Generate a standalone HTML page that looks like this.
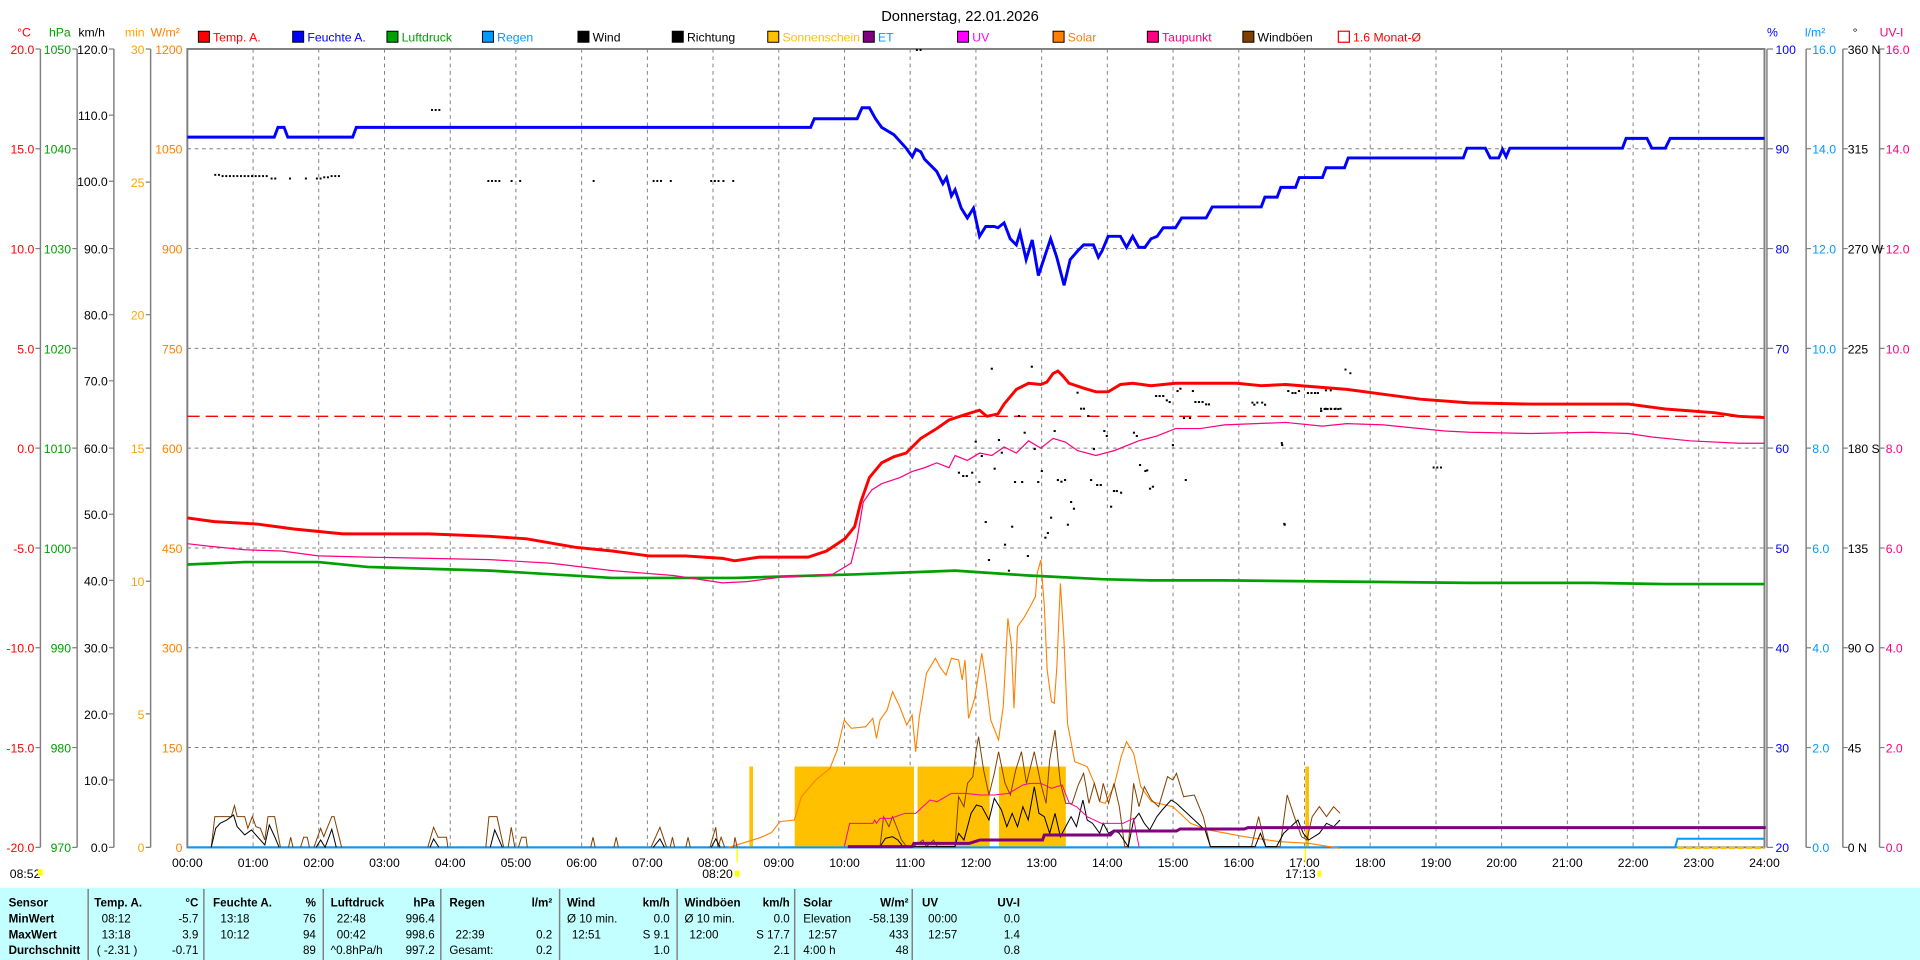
<!DOCTYPE html>
<html><head><meta charset="utf-8"><style>
html,body{margin:0;padding:0;background:#fff;}
svg{display:block;}
text{font-family:"Liberation Sans",sans-serif;}
</style></head><body>
<svg width="1920" height="960" viewBox="0 0 1568 784" preserveAspectRatio="none" xmlns="http://www.w3.org/2000/svg">
<rect width="1568" height="784" fill="#fff"/>
<text x="784" y="17" font-size="12" text-anchor="middle">Donnerstag, 22.01.2026</text>

<!-- legend -->
<g font-size="10">
<rect x="162" y="25.5" width="9" height="9" fill="#ff0000" stroke="#000" stroke-width="0.8"/><text x="174" y="34" fill="#ff0000">Temp. A.</text>
<rect x="239" y="25.5" width="9" height="9" fill="#0000ff" stroke="#000" stroke-width="0.8"/><text x="251" y="34" fill="#0000ff">Feuchte A.</text>
<rect x="316" y="25.5" width="9" height="9" fill="#00a000" stroke="#000" stroke-width="0.8"/><text x="328" y="34" fill="#00a000">Luftdruck</text>
<rect x="394" y="25.5" width="9" height="9" fill="#0099ff" stroke="#000" stroke-width="0.8"/><text x="406" y="34" fill="#0099ff">Regen</text>
<rect x="472" y="25.5" width="9" height="9" fill="#000" stroke="#000" stroke-width="0.8"/><text x="484" y="34" fill="#000">Wind</text>
<rect x="549" y="25.5" width="9" height="9" fill="#000" stroke="#000" stroke-width="0.8"/><text x="561" y="34" fill="#000">Richtung</text>
<rect x="627" y="25.5" width="9" height="9" fill="#ffc000" stroke="#000" stroke-width="0.8"/><text x="639" y="34" fill="#ffc000">Sonnenschein</text>
<rect x="705" y="25.5" width="9" height="9" fill="#800080" stroke="#000" stroke-width="0.8"/><text x="717" y="34" fill="#0099ff">ET</text>
<rect x="782" y="25.5" width="9" height="9" fill="#ff00ff" stroke="#000" stroke-width="0.8"/><text x="794" y="34" fill="#ff00ff">UV</text>
<rect x="860" y="25.5" width="9" height="9" fill="#ff8000" stroke="#000" stroke-width="0.8"/><text x="872" y="34" fill="#ff8000">Solar</text>
<rect x="937" y="25.5" width="9" height="9" fill="#ff0080" stroke="#000" stroke-width="0.8"/><text x="949" y="34" fill="#ff0080">Taupunkt</text>
<rect x="1015" y="25.5" width="9" height="9" fill="#804000" stroke="#000" stroke-width="0.8"/><text x="1027" y="34" fill="#000">Windböen</text>
<rect x="1093" y="25.5" width="9" height="9" fill="#fff" stroke="#ff0000" stroke-width="1"/><text x="1105" y="34" fill="#ff0000">1.6 Monat-Ø</text>
</g>

<!-- axis headers -->
<g font-size="10">
<text x="14" y="30" fill="#ff0000">°C</text>
<text x="40" y="30" fill="#00a000">hPa</text>
<text x="64" y="30" fill="#000">km/h</text>
<text x="102" y="30" fill="#ffa500">min</text>
<text x="123" y="30" fill="#ff8000">W/m²</text>
<text x="1443" y="30" fill="#0000ff">%</text>
<text x="1474" y="30" fill="#0099ff">l/m²</text>
<text x="1513" y="30" fill="#000">°</text>
<text x="1535" y="30" fill="#ff0080">UV-I</text>
</g>

<!-- grid -->
<g stroke="#808080" stroke-width="0.8" stroke-dasharray="3,3">
<line x1="153" y1="121.5" x2="1441" y2="121.5"/><line x1="153" y1="203" x2="1441" y2="203"/><line x1="153" y1="284.5" x2="1441" y2="284.5"/><line x1="153" y1="366" x2="1441" y2="366"/><line x1="153" y1="447.5" x2="1441" y2="447.5"/><line x1="153" y1="529" x2="1441" y2="529"/><line x1="153" y1="610.5" x2="1441" y2="610.5"/>
<line x1="206.7" y1="40" x2="206.7" y2="692"/><line x1="260.3" y1="40" x2="260.3" y2="692"/><line x1="314" y1="40" x2="314" y2="692"/><line x1="367.7" y1="40" x2="367.7" y2="692"/><line x1="421.3" y1="40" x2="421.3" y2="692"/><line x1="475" y1="40" x2="475" y2="692"/><line x1="528.7" y1="40" x2="528.7" y2="692"/><line x1="582.3" y1="40" x2="582.3" y2="692"/><line x1="636" y1="40" x2="636" y2="692"/><line x1="689.7" y1="40" x2="689.7" y2="692"/><line x1="743.3" y1="40" x2="743.3" y2="692"/><line x1="797" y1="40" x2="797" y2="692"/><line x1="850.7" y1="40" x2="850.7" y2="692"/><line x1="904.3" y1="40" x2="904.3" y2="692"/><line x1="958" y1="40" x2="958" y2="692"/><line x1="1011.7" y1="40" x2="1011.7" y2="692"/><line x1="1065.3" y1="40" x2="1065.3" y2="692"/><line x1="1119" y1="40" x2="1119" y2="692"/><line x1="1172.7" y1="40" x2="1172.7" y2="692"/><line x1="1226.3" y1="40" x2="1226.3" y2="692"/><line x1="1280" y1="40" x2="1280" y2="692"/><line x1="1333.7" y1="40" x2="1333.7" y2="692"/><line x1="1387.3" y1="40" x2="1387.3" y2="692"/>
</g>

<!-- axes lines -->
<g stroke="#808080" stroke-width="1.2" fill="none">
<line x1="33" y1="40" x2="33" y2="692"/><line x1="63" y1="40" x2="63" y2="692"/><line x1="93" y1="40" x2="93" y2="692"/><line x1="123" y1="40" x2="123" y2="692"/>
<line x1="1475" y1="40" x2="1475" y2="692"/><line x1="1505" y1="40" x2="1505" y2="692"/><line x1="1535" y1="40" x2="1535" y2="692"/>
</g>
<rect x="153" y="40" width="1288" height="652" fill="none" stroke="#808080" stroke-width="1.6"/>
<line x1="1443" y1="40" x2="1443" y2="692" stroke="#808080" stroke-width="1.2"/>
<!-- ticks -->
<g stroke="#808080" stroke-width="1">
<path d="M29 40H33M29 121.5H33M29 203H33M29 284.5H33M29 366H33M29 447.5H33M29 529H33M29 610.5H33M29 692H33"/>
<path d="M59 40H63M59 121.5H63M59 203H63M59 284.5H63M59 366H63M59 447.5H63M59 529H63M59 610.5H63M59 692H63"/>
<path d="M89 40H93M89 94H93M89 148H93M89 203H93M89 257H93M89 311H93M89 366H93M89 420H93M89 474H93M89 529H93M89 583H93M89 637H93M89 692H93"/>
<path d="M119 40H123M119 148.7H123M119 257H123M119 366H123M119 474.7H123M119 583H123M119 692H123"/>
<path d="M1443 40H1448M1443 121.5H1448M1443 203H1448M1443 284.5H1448M1443 366H1448M1443 447.5H1448M1443 529H1448M1443 610.5H1448M1443 692H1448"/>
<path d="M1475 40H1479M1475 121.5H1479M1475 203H1479M1475 284.5H1479M1475 366H1479M1475 447.5H1479M1475 529H1479M1475 610.5H1479M1475 692H1479"/>
<path d="M1505 40H1509M1505 121.5H1509M1505 203H1509M1505 284.5H1509M1505 366H1509M1505 447.5H1509M1505 529H1509M1505 610.5H1509M1505 692H1509"/>
<path d="M1535 40H1539M1535 121.5H1539M1535 203H1539M1535 284.5H1539M1535 366H1539M1535 447.5H1539M1535 529H1539M1535 610.5H1539M1535 692H1539"/>
</g>

<!-- left labels -->
<g font-size="10" text-anchor="end">
<g fill="#ff0000"><text x="28" y="44">20.0</text><text x="28" y="125.5">15.0</text><text x="28" y="207">10.0</text><text x="28" y="288.5">5.0</text><text x="28" y="370">0.0</text><text x="28" y="451.5">-5.0</text><text x="28" y="533">-10.0</text><text x="28" y="614.5">-15.0</text><text x="28" y="696">-20.0</text></g>
<g fill="#00a000"><text x="58" y="44">1050</text><text x="58" y="125.5">1040</text><text x="58" y="207">1030</text><text x="58" y="288.5">1020</text><text x="58" y="370">1010</text><text x="58" y="451.5">1000</text><text x="58" y="533">990</text><text x="58" y="614.5">980</text><text x="58" y="696">970</text></g>
<g fill="#000"><text x="88" y="44">120.0</text><text x="88" y="98">110.0</text><text x="88" y="152">100.0</text><text x="88" y="207">90.0</text><text x="88" y="261">80.0</text><text x="88" y="315">70.0</text><text x="88" y="370">60.0</text><text x="88" y="424">50.0</text><text x="88" y="478">40.0</text><text x="88" y="533">30.0</text><text x="88" y="587">20.0</text><text x="88" y="641">10.0</text><text x="88" y="696">0.0</text></g>
<g fill="#ffa500"><text x="118" y="44">30</text><text x="118" y="152.7">25</text><text x="118" y="261">20</text><text x="118" y="370">15</text><text x="118" y="478.7">10</text><text x="118" y="587">5</text><text x="118" y="696">0</text></g>
<g fill="#ff8000"><text x="149" y="44">1200</text><text x="149" y="125.5">1050</text><text x="149" y="207">900</text><text x="149" y="288.5">750</text><text x="149" y="370">600</text><text x="149" y="451.5">450</text><text x="149" y="533">300</text><text x="149" y="614.5">150</text><text x="149" y="696">0</text></g>
</g>
<!-- right labels -->
<g font-size="10">
<g fill="#0000ff"><text x="1450" y="44">100</text><text x="1450" y="125.5">90</text><text x="1450" y="207">80</text><text x="1450" y="288.5">70</text><text x="1450" y="370">60</text><text x="1450" y="451.5">50</text><text x="1450" y="533">40</text><text x="1450" y="614.5">30</text><text x="1450" y="696">20</text></g>
<g fill="#0099ff"><text x="1480" y="44">16.0</text><text x="1480" y="125.5">14.0</text><text x="1480" y="207">12.0</text><text x="1480" y="288.5">10.0</text><text x="1480" y="370">8.0</text><text x="1480" y="451.5">6.0</text><text x="1480" y="533">4.0</text><text x="1480" y="614.5">2.0</text><text x="1480" y="696">0.0</text></g>
<g fill="#000"><text x="1509" y="44">360 N</text><text x="1509" y="125.5">315</text><text x="1509" y="207">270 W</text><text x="1509" y="288.5">225</text><text x="1509" y="370">180 S</text><text x="1509" y="451.5">135</text><text x="1509" y="533">90  O</text><text x="1509" y="614.5">45</text><text x="1509" y="696">0   N</text></g>
<g fill="#ff0080"><text x="1540" y="44">16.0</text><text x="1540" y="125.5">14.0</text><text x="1540" y="207">12.0</text><text x="1540" y="288.5">10.0</text><text x="1540" y="370">8.0</text><text x="1540" y="451.5">6.0</text><text x="1540" y="533">4.0</text><text x="1540" y="614.5">2.0</text><text x="1540" y="696">0.0</text></g>
</g>

<!-- hour labels -->
<g font-size="10" text-anchor="middle">
<text x="153" y="708">00:00</text><text x="206.7" y="708">01:00</text><text x="260.3" y="708">02:00</text><text x="314" y="708">03:00</text><text x="367.7" y="708">04:00</text><text x="421.3" y="708">05:00</text><text x="475" y="708">06:00</text><text x="528.7" y="708">07:00</text><text x="582.3" y="708">08:00</text><text x="636" y="708">09:00</text><text x="689.7" y="708">10:00</text><text x="743.3" y="708">11:00</text><text x="797" y="708">12:00</text><text x="850.7" y="708">13:00</text><text x="904.3" y="708">14:00</text><text x="958" y="708">15:00</text><text x="1011.7" y="708">16:00</text><text x="1065.3" y="708">17:00</text><text x="1119" y="708">18:00</text><text x="1172.7" y="708">19:00</text><text x="1226.3" y="708">20:00</text><text x="1280" y="708">21:00</text><text x="1333.7" y="708">22:00</text><text x="1387.3" y="708">23:00</text><text x="1441" y="708">24:00</text>
<text x="586" y="717">08:20</text><text x="1062" y="717">17:13</text>
</g>
<text x="8" y="717" font-size="10">08:52</text>
<rect x="31" y="710" width="4" height="5" fill="#ffff00"/>
<rect x="600" y="711" width="4" height="5" fill="#ffff00"/>
<rect x="1076" y="711" width="3" height="5" fill="#ffff00"/>
<line x1="602" y1="692" x2="602" y2="704" stroke="#ffff00" stroke-width="1.2"/>
<line x1="1066" y1="692" x2="1066" y2="704" stroke="#ffff00" stroke-width="1.2"/>

<!-- sunshine bars -->
<g fill="#ffc000">
<rect x="612" y="626" width="3" height="66"/>
<rect x="649" y="626" width="97.4" height="66"/>
<rect x="749.3" y="626" width="58.9" height="66"/>
<rect x="815.8" y="626" width="54.6" height="66"/>
<rect x="1066" y="626" width="3" height="66"/>
</g>
<line x1="1370" y1="692.5" x2="1441" y2="692.5" stroke="#ffc000" stroke-width="2" stroke-dasharray="5,2"/>

<!-- dashed monthly avg -->
<line x1="153" y1="340" x2="1441" y2="340" stroke="#ff0000" stroke-width="1.2" stroke-dasharray="10,5"/>

<!-- rain line -->
<polyline fill="none" stroke="#0099ff" stroke-width="1.6" points="153,692 1368,692 1370,685 1441,685"/>

<!-- solar orange -->
<polyline fill="none" stroke="#ff8000" stroke-width="0.9" points="595,692 605,689 621,684 630,680 637,671 648.7,669.7 654.5,650.6 666.2,637 677.8,627.5 683.7,612.5 689.5,588 695.3,594.8 707,593.5 712.8,586.7 715.8,603 718.7,588 724.5,579.8 728.9,564.9 734.7,577.1 740.5,592.1 744.9,583.9 747.8,613.9 750.8,585.3 756.6,549.9 763.9,537.6 768.3,545.8 772.6,551.3 777,537.6 782.9,539 785.8,555.3 788.1,539 791,586.7 796,570.3 801.8,533.6 804.7,552.6 809.1,588 815.5,604.3 819.3,577.1 823.1,505 826,526.8 828.1,578.5 831,511.8 836.8,503.6 841.2,495.5 845.6,487.3 847,468.2 850,457.4 852.9,495.5 855.2,547.2 858.7,573 861,574.4 863.1,544.5 866,476.4 868.9,522.7 871.8,590.7 877.7,622 887.9,626.1 893.7,639.7 898.1,654.7 902.5,656.1 909.7,642.4 915.6,618 920,605.7 925.8,615.2 931.6,642.4 940.4,654.7 957.9,658.8 972.4,672.4 987,677.8 1016.2,683.3 1045.4,687.4 1068.7,688.7 1094.4,692.8"/>

<!-- early wind / gust (zoom8 coords) -->
<g transform="translate(147,604.3) scale(0.3646,0.2722)" fill="none">
<g stroke="#804000" stroke-width="1" vector-effect="non-scaling-stroke">
<polyline vector-effect="non-scaling-stroke" points="70,322 78,230 115,230 122,197 128,230 145,230 152,265 162,230 170,260 180,265 190,300 197,230 212,230 225,322"/>
<polyline vector-effect="non-scaling-stroke" points="243,322 248,292 253,322"/>
<polyline vector-effect="non-scaling-stroke" points="270,322 277,292 285,292 290,322"/>
<polyline vector-effect="non-scaling-stroke" points="300,322 315,265 322,290 340,230 345,230 362,322"/>
<polyline vector-effect="non-scaling-stroke" points="555,322 568,262 578,292 597,292 600,322"/>
<polyline vector-effect="non-scaling-stroke" points="685,322 692,230 710,230 725,322"/>
<polyline vector-effect="non-scaling-stroke" points="735,322 742,262 750,322"/>
<polyline vector-effect="non-scaling-stroke" points="758,322 765,292 775,292 778,322"/>
<polyline vector-effect="non-scaling-stroke" points="920,322 925,292 930,322"/>
<polyline vector-effect="non-scaling-stroke" points="972,322 977,292 982,322"/>
<polyline vector-effect="non-scaling-stroke" points="1055,322 1075,262 1090,322"/>
<polyline vector-effect="non-scaling-stroke" points="1098,322 1103,292 1108,322"/>
<polyline vector-effect="non-scaling-stroke" points="1133,322 1138,292 1143,322"/>
<polyline vector-effect="non-scaling-stroke" points="1187,322 1200,262 1205,322 1212,292 1220,322"/>
<polyline vector-effect="non-scaling-stroke" points="1240,322 1243,292 1248,322"/>
</g>
<g stroke="#000">
<polyline vector-effect="non-scaling-stroke" points="70,322 80,265 90,250 105,240 120,225 128,260 145,285 160,270 180,300 190,315 200,255 212,290 222,322"/>
<polyline vector-effect="non-scaling-stroke" points="305,322 315,300 325,322 340,268 350,322"/>
<polyline vector-effect="non-scaling-stroke" points="560,322 568,297 580,322"/>
<polyline vector-effect="non-scaling-stroke" points="695,322 705,270 722,322"/>
<polyline vector-effect="non-scaling-stroke" points="1060,322 1075,297 1085,322"/>
<polyline vector-effect="non-scaling-stroke" points="1190,322 1200,297 1210,322"/>
</g>
</g>

<!-- midday series (zoom5 coords) -->
<g transform="translate(637,277.7) scale(0.2917,0.2722)" fill="none">
<polyline stroke="#804000" vector-effect="non-scaling-stroke" points="280,1520 290,1430 305,1460 315,1430 330,1470 340,1500 355,1520 375,1520 400,1500 410,1520 430,1500 440,1520 490,1520 500,1370 515,1400 525,1330 540,1310 548,1240 556,1190 570,1290 585,1365 600,1300 612,1235 630,1330 645,1365 660,1290 676,1235 690,1330 712,1235 730,1330 745,1390 755,1260 770,1170 785,1330 800,1390 818,1390 835,1335 850,1300 865,1390 880,1330 895,1385 905,1330 920,1390 935,1330 950,1400 965,1520 975,1520 990,1330 1005,1400 1020,1340 1040,1380 1060,1400 1085,1310 1100,1320 1110,1300 1130,1370 1160,1365 1185,1430 1205,1520 1320,1520 1340,1430 1360,1520 1400,1520 1420,1365 1440,1430 1460,1490 1475,1500 1490,1430 1510,1400 1530,1430 1550,1400 1568,1420"/>
<polyline stroke="#000" vector-effect="non-scaling-stroke" points="280,1520 295,1495 315,1490 330,1500 345,1520 490,1520 500,1480 515,1500 535,1420 550,1395 565,1400 585,1440 600,1375 620,1410 635,1460 650,1420 665,1460 680,1400 695,1440 712,1340 725,1420 740,1430 755,1480 770,1420 785,1490 800,1460 815,1430 830,1460 848,1380 860,1440 875,1450 895,1480 905,1450 920,1480 935,1470 950,1480 975,1520 990,1440 1005,1420 1020,1450 1035,1470 1055,1430 1070,1410 1095,1380 1110,1390 1140,1420 1170,1450 1190,1470 1205,1520 1330,1520 1345,1480 1360,1520 1390,1520 1410,1480 1450,1440 1465,1480 1480,1500 1495,1490 1510,1480 1530,1450 1550,1460 1568,1440"/>
<polyline stroke="#ff00a0" vector-effect="non-scaling-stroke" points="180,1520 195,1450 260,1450 265,1440 270,1450 280,1435 310,1435 350,1420 380,1420 400,1400 420,1380 440,1385 480,1360 520,1360 560,1365 600,1365 640,1360 680,1335 700,1330 730,1330 760,1345 790,1335 810,1390 830,1400 860,1430 900,1450 960,1450 990,1435 1005,1520"/>
<polyline stroke="#800080" stroke-width="3" vector-effect="non-scaling-stroke" points="190,1520 370,1520 375,1510 530,1510 560,1500 735,1500 740,1485 925,1485 935,1473 1110,1473 1120,1467 1300,1467 1310,1463 1568,1463 2760,1463"/>
<g fill="#000" stroke="none">
<rect x="590" y="83" width="6" height="6"/><rect x="702" y="77" width="6" height="6"/><rect x="830" y="155" width="6" height="6"/><rect x="840" y="203" width="6" height="6"/><rect x="848" y="203" width="6" height="6"/><rect x="860" y="225" width="6" height="6"/><rect x="666" y="225" width="6" height="6"/><rect x="682" y="275" width="6" height="6"/><rect x="766" y="270" width="6" height="6"/><rect x="905" y="270" width="6" height="6"/><rect x="912" y="285" width="6" height="6"/><rect x="988" y="275" width="6" height="6"/><rect x="996" y="285" width="6" height="6"/><rect x="545" y="302" width="6" height="6"/><rect x="610" y="297" width="6" height="6"/><rect x="710" y="324" width="6" height="6"/><rect x="876" y="324" width="6" height="6"/><rect x="1097" y="312" width="6" height="6"/><rect x="1403" y="312" width="6" height="6"/><rect x="562" y="345" width="6" height="6"/><rect x="618" y="335" width="6" height="6"/><rect x="598" y="383" width="6" height="6"/><rect x="498" y="395" width="6" height="6"/><rect x="510" y="405" width="6" height="6"/><rect x="520" y="405" width="6" height="6"/><rect x="535" y="395" width="6" height="6"/><rect x="730" y="390" width="6" height="6"/><rect x="1005" y="372" width="6" height="6"/><rect x="1020" y="390" width="6" height="6"/><rect x="1025" y="388" width="6" height="6"/><rect x="555" y="423" width="6" height="6"/><rect x="655" y="423" width="6" height="6"/><rect x="675" y="423" width="6" height="6"/><rect x="720" y="423" width="6" height="6"/><rect x="775" y="417" width="6" height="6"/><rect x="785" y="422" width="6" height="6"/><rect x="795" y="417" width="6" height="6"/><rect x="868" y="417" width="6" height="6"/><rect x="885" y="432" width="6" height="6"/><rect x="895" y="432" width="6" height="6"/><rect x="1133" y="417" width="6" height="6"/><rect x="1033" y="443" width="6" height="6"/><rect x="1041" y="437" width="6" height="6"/><rect x="932" y="450" width="6" height="6"/><rect x="940" y="450" width="6" height="6"/><rect x="952" y="455" width="6" height="6"/><rect x="812" y="483" width="6" height="6"/><rect x="820" y="503" width="6" height="6"/><rect x="924" y="497" width="6" height="6"/><rect x="756" y="530" width="6" height="6"/><rect x="573" y="543" width="6" height="6"/><rect x="647" y="557" width="6" height="6"/><rect x="803" y="551" width="6" height="6"/><rect x="1410" y="551" width="6" height="6"/><rect x="747" y="576" width="6" height="6"/><rect x="740" y="590" width="6" height="6"/><rect x="627" y="611" width="6" height="6"/><rect x="582" y="657" width="6" height="6"/><rect x="691" y="645" width="6" height="6"/><rect x="638" y="689" width="6" height="6"/><rect x="1050" y="165" width="6" height="6"/><rect x="1060" y="165" width="6" height="6"/><rect x="1070" y="165" width="6" height="6"/><rect x="1080" y="178" width="6" height="6"/><rect x="1088" y="183" width="6" height="6"/><rect x="1110" y="150" width="6" height="6"/><rect x="1118" y="143" width="6" height="6"/><rect x="1153" y="150" width="6" height="6"/><rect x="1160" y="183" width="6" height="6"/><rect x="1170" y="183" width="6" height="6"/><rect x="1180" y="183" width="6" height="6"/><rect x="1190" y="190" width="6" height="6"/><rect x="1198" y="190" width="6" height="6"/><rect x="1128" y="231" width="6" height="6"/><rect x="1145" y="231" width="6" height="6"/><rect x="1325" y="191" width="6" height="6"/><rect x="1355" y="191" width="6" height="6"/><rect x="1420" y="150" width="6" height="6"/><rect x="1432" y="156" width="6" height="6"/><rect x="1440" y="156" width="6" height="6"/><rect x="1450" y="150" width="6" height="6"/><rect x="1475" y="156" width="6" height="6"/><rect x="1485" y="156" width="6" height="6"/><rect x="1495" y="156" width="6" height="6"/><rect x="1503" y="156" width="6" height="6"/><rect x="1512" y="210" width="6" height="6"/><rect x="1522" y="204" width="6" height="6"/><rect x="1530" y="204" width="6" height="6"/><rect x="1540" y="204" width="6" height="6"/><rect x="1550" y="204" width="6" height="6"/><rect x="1560" y="204" width="6" height="6"/>
</g>
</g>

<!-- direction dots (early / late) -->
<g fill="#000">
<rect x="175" y="142" width="1.6" height="1.6"/><rect x="178" y="142" width="1.6" height="1.6"/><rect x="181" y="143" width="1.6" height="1.6"/><rect x="184" y="143" width="1.6" height="1.6"/><rect x="187" y="143" width="1.6" height="1.6"/><rect x="190" y="143" width="1.6" height="1.6"/><rect x="193" y="143" width="1.6" height="1.6"/><rect x="196" y="143" width="1.6" height="1.6"/><rect x="199" y="143" width="1.6" height="1.6"/><rect x="202" y="143" width="1.6" height="1.6"/><rect x="205" y="143" width="1.6" height="1.6"/><rect x="208" y="143" width="1.6" height="1.6"/><rect x="211" y="143" width="1.6" height="1.6"/><rect x="214" y="143" width="1.6" height="1.6"/><rect x="217" y="143" width="1.6" height="1.6"/><rect x="221" y="145" width="1.6" height="1.6"/><rect x="224" y="145" width="1.6" height="1.6"/><rect x="236" y="145" width="1.6" height="1.6"/><rect x="249" y="145" width="1.6" height="1.6"/><rect x="258" y="145" width="1.6" height="1.6"/><rect x="261" y="145" width="1.6" height="1.6"/><rect x="264" y="144" width="1.6" height="1.6"/><rect x="267" y="144" width="1.6" height="1.6"/><rect x="270" y="143" width="1.6" height="1.6"/><rect x="273" y="143" width="1.6" height="1.6"/><rect x="276" y="143" width="1.6" height="1.6"/>
<rect x="352" y="89" width="1.6" height="1.6"/><rect x="355" y="89" width="1.6" height="1.6"/><rect x="358" y="89" width="1.6" height="1.6"/>
<rect x="398" y="147" width="1.6" height="1.6"/><rect x="401" y="147" width="1.6" height="1.6"/><rect x="404" y="147" width="1.6" height="1.6"/><rect x="407" y="147" width="1.6" height="1.6"/><rect x="417" y="147" width="1.6" height="1.6"/><rect x="424" y="147" width="1.6" height="1.6"/><rect x="484" y="147" width="1.6" height="1.6"/><rect x="533" y="147" width="1.6" height="1.6"/><rect x="536" y="147" width="1.6" height="1.6"/><rect x="539" y="147" width="1.6" height="1.6"/><rect x="547" y="147" width="1.6" height="1.6"/><rect x="580" y="147" width="1.6" height="1.6"/><rect x="583" y="147" width="1.6" height="1.6"/><rect x="586" y="147" width="1.6" height="1.6"/><rect x="590" y="147" width="1.6" height="1.6"/><rect x="598" y="147" width="1.6" height="1.6"/>
<rect x="748" y="40" width="1.6" height="1.6"/><rect x="751" y="40" width="1.6" height="1.6"/>
<rect x="1048" y="427" width="1.6" height="1.6"/><rect x="1170" y="381" width="1.6" height="1.6"/><rect x="1173" y="381" width="1.6" height="1.6"/><rect x="1176" y="381" width="1.6" height="1.6"/><rect x="1098" y="301" width="1.6" height="1.6"/><rect x="1102" y="304" width="1.6" height="1.6"/><rect x="1078" y="333" width="1.6" height="1.6"/><rect x="1082" y="333" width="1.6" height="1.6"/><rect x="1086" y="333" width="1.6" height="1.6"/><rect x="1090" y="333" width="1.6" height="1.6"/><rect x="1094" y="333" width="1.6" height="1.6"/><rect x="1022" y="328" width="1.6" height="1.6"/><rect x="1026" y="328" width="1.6" height="1.6"/><rect x="1030" y="328" width="1.6" height="1.6"/><rect x="1046" y="361" width="1.6" height="1.6"/><rect x="1082" y="318" width="1.6" height="1.6"/><rect x="1086" y="318" width="1.6" height="1.6"/>
</g>

<!-- green pressure -->
<polyline fill="none" stroke="#00a000" stroke-width="2.2" points="153,461 200,459 260,459 300,463 400,466 500,472 600,472 700,469 780,466 840,470 900,473 940,474 1000,474 1100,475 1200,476 1300,476 1360,477 1441,477"/>
<!-- pink dew -->
<polyline fill="none" stroke="#ff0080" stroke-width="1" points="153,444 170,446 200,449 230,450 260,454 300,455 400,457 450,460 500,466 550,470 590,476 610,475 640,471 680,469 695,460 700,440 705,410 712,400 720,395 735,390 745,385 755,382 765,378 775,382 780,372 790,376 800,370 810,372 820,365 830,370 840,360 850,366 860,358 870,361 880,368 895,372 910,368 930,360 945,356 960,350 980,350 1000,347 1050,345 1080,348 1100,346 1130,347 1150,349 1180,352 1200,353 1250,354 1300,353 1330,354 1350,357 1380,360 1420,362 1441,362"/>
<!-- red temp -->
<polyline fill="none" stroke="#ff0000" stroke-width="2.4" points="153,423 175,426 210,428 240,432 280,436 350,436 400,438 430,440 470,447 500,450 530,454 560,454 590,456 600,458 620,455 660,455 675,450 690,440 698,430 703,410 710,390 720,378 730,373 740,370 745,365 752,358 765,350 775,343 790,338 800,335 806,340 815,338 820,330 830,318 840,313 850,314 855,312 860,305 864,303 868,307 873,313 885,317 895,320 905,320 915,314 925,313 940,315 960,313 1010,313 1030,315 1050,314 1100,318 1130,322 1160,326 1200,329 1250,330 1330,330 1360,334 1400,337 1420,340 1441,341"/>
<!-- blue humidity -->
<polyline fill="none" stroke="#0000ff" stroke-width="2.4" points="153,112 224,112 227,104 232,104 235,112 288,112 291,104 662,104 665,97 700,97 704,88 710,88 715,97 720,104 730,110 740,121 745,128 748,122 752,124 755,130 760,135 765,140 770,150 773,145 777,160 780,155 785,170 790,178 795,170 800,193 805,185 812,185 815,186 820,182 825,195 830,200 833,190 838,212 843,196 848,225 853,210 858,195 863,210 869,233 874,212 880,205 885,200 893,200 897,210 900,205 905,193 915,193 920,202 925,193 930,202 935,202 940,195 945,193 950,186 960,186 965,178 985,178 990,169 1030,169 1033,161 1043,161 1046,153 1058,153 1061,145 1080,145 1083,137 1098,137 1101,129 1195,129 1198,121 1213,121 1217,129 1224,129 1227,122 1230,128 1233,121 1325,121 1328,113 1345,113 1349,121 1360,121 1364,113 1441,113"/>

<!-- table -->
<rect x="0" y="725" width="1568" height="59" fill="#c4ffff"/>
<g stroke="#808080" stroke-width="1.2">
<line x1="72" y1="726" x2="72" y2="784"/><line x1="166.5" y1="726" x2="166.5" y2="784"/><line x1="264" y1="726" x2="264" y2="784"/><line x1="360" y1="726" x2="360" y2="784"/><line x1="457" y1="726" x2="457" y2="784"/><line x1="553" y1="726" x2="553" y2="784"/><line x1="649" y1="726" x2="649" y2="784"/><line x1="745" y1="726" x2="745" y2="784"/>
</g>
<g font-size="9.5" font-weight="bold">
<text x="7" y="740.5">Sensor</text><text x="7" y="753.5">MinWert</text><text x="7" y="766.5">MaxWert</text><text x="7" y="779">Durchschnitt</text>
<text x="77" y="740.5">Temp. A.</text><text x="174" y="740.5">Feuchte A.</text><text x="270" y="740.5">Luftdruck</text><text x="367" y="740.5">Regen</text><text x="463" y="740.5">Wind</text><text x="559" y="740.5">Windböen</text><text x="656" y="740.5">Solar</text><text x="753" y="740.5">UV</text>
<g text-anchor="end"><text x="162" y="740.5">°C</text><text x="258" y="740.5">%</text><text x="355" y="740.5">hPa</text><text x="451" y="740.5">l/m²</text><text x="547" y="740.5">km/h</text><text x="645" y="740.5">km/h</text><text x="742" y="740.5">W/m²</text><text x="833" y="740.5">UV-I</text></g>
</g>
<g font-size="9.5">
<text x="83" y="753.5">08:12</text><text x="83" y="766.5">13:18</text><text x="79" y="779">( -2.31 )</text>
<text x="180" y="753.5">13:18</text><text x="180" y="766.5">10:12</text>
<text x="275" y="753.5">22:48</text><text x="275" y="766.5">00:42</text><text x="270" y="779">^0.8hPa/h</text>
<text x="372" y="766.5">22:39</text><text x="367" y="779">Gesamt:</text>
<text x="463" y="753.5">Ø 10 min.</text><text x="467" y="766.5">12:51</text>
<text x="559" y="753.5">Ø 10 min.</text><text x="563" y="766.5">12:00</text>
<text x="656" y="753.5">Elevation</text><text x="660" y="766.5">12:57</text><text x="656" y="779">4:00 h</text>
<text x="758" y="753.5">00:00</text><text x="758" y="766.5">12:57</text>
<g text-anchor="end">
<text x="162" y="753.5">-5.7</text><text x="162" y="766.5">3.9</text><text x="162" y="779">-0.71</text>
<text x="258" y="753.5">76</text><text x="258" y="766.5">94</text><text x="258" y="779">89</text>
<text x="355" y="753.5">996.4</text><text x="355" y="766.5">998.6</text><text x="355" y="779">997.2</text>
<text x="451" y="766.5">0.2</text><text x="451" y="779">0.2</text>
<text x="547" y="753.5">0.0</text><text x="547" y="766.5">S 9.1</text><text x="547" y="779">1.0</text>
<text x="645" y="753.5">0.0</text><text x="645" y="766.5">S 17.7</text><text x="645" y="779">2.1</text>
<text x="742" y="753.5">-58.139</text><text x="742" y="766.5">433</text><text x="742" y="779">48</text>
<text x="833" y="753.5">0.0</text><text x="833" y="766.5">1.4</text><text x="833" y="779">0.8</text>
</g>
</g>
</svg>
</body></html>
